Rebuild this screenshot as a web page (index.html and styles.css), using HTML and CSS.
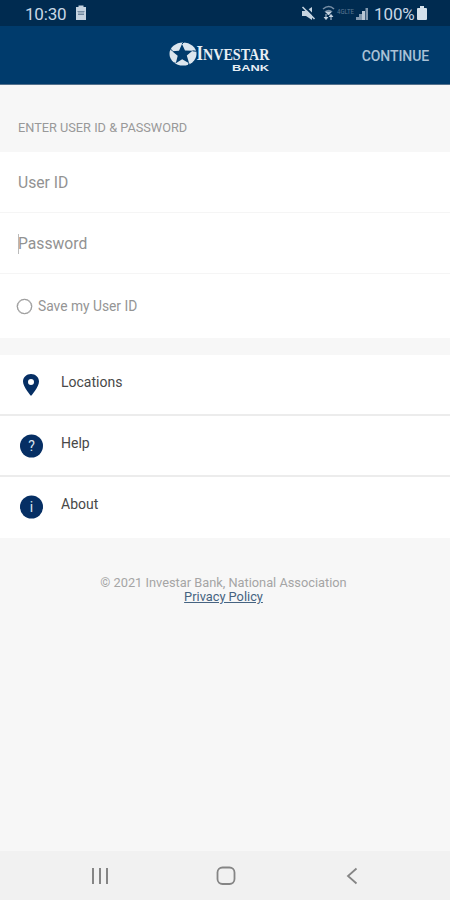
FILE: index.html
```html
<!DOCTYPE html>
<html lang="en">
<head>
<meta charset="utf-8">
<title>Investar Bank</title>
<link rel="stylesheet" href="styles.css">
</head>
<body>
<div class="status">
  <span class="time">10:30</span>
  <svg class="saver" width="12" height="16" viewBox="0 0 12 16"><path d="M1 2h2.500V0.500h5V2H11v13H1z" fill="#c5d3e0"/><path d="M2.500 6.500h7M3 9.500h6M4 7v3M6 7v3M8 7v3" stroke="#627b93" stroke-width=".8"/></svg>
  <svg class="signals" width="68" height="18" viewBox="0 0 68 18">
    <path d="M0 7h4l6-4v13l-6-4H0z" fill="#c5d3e0"/><path d="M1 1l13 13" stroke="#002b50" stroke-width="2"/><path d="M.5 3l12 12" stroke="#c5d3e0" stroke-width="1.600"/>
    <path d="M21 5q6-5 11 0M23 8q4-3 7 0" fill="none" stroke="#7890a7" stroke-width="1.600"/><path d="M24 8h5l-2.500 3zM24 10v5M22 13l2 2.500 2-2.500M29 16v-5M27 13l2-2.500 2 2.500" fill="#c5d3e0" stroke="#c5d3e0" stroke-width="1"/>
    <text x="35" y="10" textLength="17" lengthAdjust="spacingAndGlyphs" class="lte">4GLTE</text>
    <path d="M54 13h3v3h-3zM57 10h3v6h-3z" fill="#8299af"/><path d="M60 7h3v9h-3z" fill="#b9c8d6"/><path d="M63.500 4H66v12h-2.500z" fill="#8299af"/>
  </svg>
  <span class="percent">100%</span>
  <svg class="battery" width="10" height="14" viewBox="0 0 10 14"><path d="M1 2h2V0h4v2h2q1 0 1 1v10q0 1-1 1H1q-1 0-1-1V3q0-1 1-1" fill="#d5e1eb"/></svg>
</div>
<header class="bar">
  <svg class="logo" width="110" height="34" viewBox="0 0 110 34">
    <ellipse cx="15" cy="14" rx="13.500" ry="11.500" fill="#dce6ee"/>
    <path d="M14 4l3 6.500 7.500 .3-5.700 4.700 2.300 7.800-6.900-4-6.400 4 1.900-7.500-5.500-4.500 6.800-.6z" fill="#003b6c"/>
    <path d="M14 4l3-3M24.500 10.800l4 .5M21 23l-1 4M7.500 23l-3 0M4.500 11l-2-2" stroke="#003b6c" stroke-width="1"/>
    <text class="name" y="19.500" x="28.500" textLength="73" lengthAdjust="spacingAndGlyphs"><tspan font-size="20">I</tspan>NVESTAR</text>
    <text class="bank" x="64" y="30.500" textLength="37" lengthAdjust="spacingAndGlyphs">BANK</text>
  </svg>
  <span class="continue">CONTINUE</span>
</header>
<main>
  <h1 class="label">ENTER USER ID &amp; PASSWORD</h1>
  <section class="form">
    <div class="field"><span class="user">User ID</span></div>
    <div class="field password"><span class="pass">Password</span></div>
    <div class="save"><i class="radio"></i><span>Save my User ID</span></div>
  </section>
  <nav class="menu">
    <div class="item"><svg width="24" height="24" viewBox="0 0 24 24"><path fill-rule="evenodd" d="M12 1C7.500 1 4 4.300 4 8.500 4 14 12 23 12 23s8-9 8-14.500C20 4.300 16.500 1 12 1m0 5a3 3 0 1 1 0 6 3 3 0 0 1 0-6" fill="#062f64"/></svg><span class="loc">Locations</span></div>
    <div class="item"><svg width="24" height="24" viewBox="0 0 24 24"><circle cx="12.500" cy="12" r="11.500" fill="#062f64"/><text x="12.500" y="17" class="glyph">?</text></svg><span class="help">Help</span></div>
    <div class="item"><svg width="24" height="24" viewBox="0 0 24 24"><circle cx="12.500" cy="12" r="11.500" fill="#062f64"/><text x="12.500" y="17" class="glyph">i</text></svg><span class="about">About</span></div>
  </nav>
  <footer class="legal"><span class="copy">© 2021 Investar Bank, National Association</span><a class="privacy">Privacy Policy</a></footer>
</main>
<div class="system">
  <svg width="18" height="18" viewBox="0 0 18 18"><path d="M2 1v16M9 1v16M16 1v16" stroke="#858585" stroke-width="2"/></svg>
  <svg class="home" width="20" height="20" viewBox="0 0 20 20"><rect x="1.500" y="1.500" width="17" height="16.500" rx="5" fill="none" stroke="#858585" stroke-width="1.800"/></svg>
  <svg width="12" height="18" viewBox="0 0 12 18"><path d="M10.500 1.500L2 9l8.500 7.500" fill="none" stroke="#858585" stroke-width="1.800"/></svg>
</div>
</body>
</html>
```
FILE: styles.css
```css
* { box-sizing: border-box; }
body { margin: 0; width: 450px; height: 900px; display: flex; flex-direction: column; background: #f7f7f7; font-family: Roboto, "Liberation Sans", sans-serif; overflow: hidden; }
svg { display: block; flex: none; overflow: visible; }
span, a { white-space: nowrap; }
.status { height: 26px; flex: none; display: flex; align-items: center; background: #002b50; color: #c8d7e5; font-size: 17px; line-height: 26px; padding: 0 23px 0 25px; }
.time { width: 50px; letter-spacing: -0.2px; padding-top: 1px; }
.signals { margin-left: auto; }
.lte { font-size: 8px; fill: #5d7993; }
.percent { margin-left: 4px; width: 40px; letter-spacing: -0.1px; padding-top: 1px; }
.battery { margin-left: 3px; }
.bar { height: 59px; flex: none; display: grid; grid-template-columns: 1fr auto 1fr; align-items: center; background: #003b6c; border-bottom: 1px solid #54718d; padding: 0 21px 0 22px; }
.logo { grid-column: 2; margin: 3px 5px 0 0; }
.name { font-family: "Liberation Serif", serif; font-size: 17px; font-weight: bold; fill: #e7eef4; }
.bank { font-family: "Liberation Sans", sans-serif; font-size: 9.5px; font-weight: bold; fill: #e7eef4; }
.continue { justify-self: end; color: #a9c1d6; font-size: 14px; font-weight: 500; letter-spacing: -0.1px; padding-top: 2px; }
main { flex: 1; display: flex; flex-direction: column; }
.label { margin: 0; height: 67px; padding: 35px 18px 0; font-size: 12.75px; line-height: 16px; font-weight: 400; color: #999; }
.form { background: #fff; height: 186px; }
.field { height: 61px; padding: 0 18px; border-bottom: 1px solid #f5f5f5; display: flex; align-items: center; font-size: 15.7px; color: #929292; }
.password { padding-top: 1px; }
.pass { border-left: 1px solid #bbb; line-height: 20px; text-indent: -1px; }
.save { height: 64px; padding: 0 17px; display: flex; align-items: center; gap: 6px; font-size: 13.8px; color: #959595; }
.radio { width: 15px; height: 15px; border: 1.5px solid #8a8a8a; border-radius: 50%; box-shadow: 0 0 0 .3px #8a8a8a; }
.menu { margin-top: 17px; height: 183px; background: #fff; display: grid; grid-template-rows: repeat(3, 61px); }
.item { display: flex; align-items: center; gap: 18px; padding: 1px 19px 0; font-size: 14px; color: #484848; border-bottom: 2px solid #ececec; }
.item:last-child { border-bottom-color: #fff; }
.item span { margin-top: -6px; }
.glyph { font-size: 14px; fill: #dbe5ef; text-anchor: middle; }
.legal { margin-top: 38px; display: flex; flex-direction: column; align-items: center; font-size: 12.8px; line-height: 14px; color: #a5a5a5; padding-right: 3px; }
.privacy { color: #466381; text-decoration: underline; }
.system { height: 49px; flex: none; display: flex; align-items: center; justify-content: space-between; background: #f1f1f1; padding: 0 92px 0 91px; }
.home { margin-right: 4px; }
```
